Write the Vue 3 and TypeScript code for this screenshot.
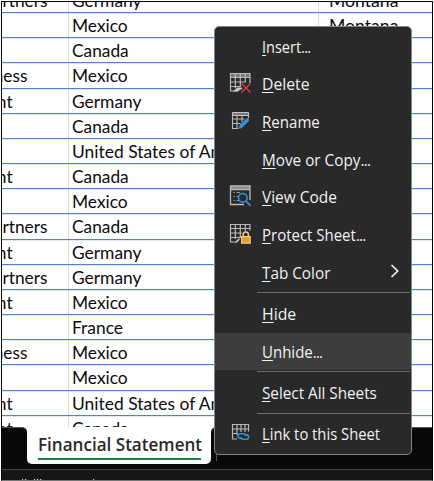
<script setup lang="ts">
import type { Directive } from 'vue'

interface Item {
  label: string
  width: number
  dots?: boolean
  icon?: 'delete' | 'rename' | 'code' | 'protect' | 'link'
  submenu?: boolean
  active?: boolean
  divider?: boolean
}

// Condenses a label horizontally so that it occupies the given width.
const vFit: Directive<HTMLElement, number> = {
  mounted(el, { value }) {
    el.style.transform = `scaleX(${value / el.offsetWidth})`
  },
}

const widths: Record<string, number> = {
  'Channel Partners': 130.6,
  'Small Business': 110.6,
  Government: 96.1,
  Germany: 69.8,
  Mexico: 56.2,
  Canada: 57,
  France: 51.1,
  'United States of America': 189.2,
  Montana: 69.7,
}

const rows: string[][] = [
  ['Channel Partners', 'Germany', 'Montana'],
  ['', 'Mexico', 'Montana'],
  ['', 'Canada', ''],
  ['Small Business', 'Mexico', ''],
  ['Government', 'Germany', ''],
  ['', 'Canada', ''],
  ['', 'United States of America', ''],
  ['Government', 'Canada', ''],
  ['', 'Mexico', ''],
  ['Channel Partners', 'Canada', ''],
  ['Government', 'Germany', ''],
  ['Channel Partners', 'Germany', ''],
  ['Government', 'Mexico', ''],
  ['', 'France', ''],
  ['Small Business', 'Mexico', ''],
  ['', 'Mexico', ''],
  ['Government', 'United States of America', ''],
  ['Government', 'Canada', ''],
]

const items: Item[] = [
  { label: 'Insert', dots: true, width: 48 },
  { label: 'Delete', width: 47.2, icon: 'delete' },
  { label: 'Rename', width: 57.5, icon: 'rename' },
  { label: 'Move or Copy', dots: true, width: 108 },
  { label: 'View Code', width: 75.2, icon: 'code' },
  { label: 'Protect Sheet', dots: true, width: 103 },
  { label: 'Tab Color', width: 68.8, submenu: true, divider: true },
  { label: 'Hide', width: 34.6 },
  { label: 'Unhide', dots: true, width: 60, active: true, divider: true },
  { label: 'Select All Sheets', width: 115.3, divider: true },
  { label: 'Link to this Sheet', width: 118.2, icon: 'link' },
]
items[5].icon = 'protect'
</script>

<template>
  <div class="page">
    <div class="window">
      <div class="sheet">
        <div v-for="(row, r) in rows" :key="r" class="row">
          <div v-for="(cell, c) in row" :key="c" class="cell">
            <span v-if="cell" v-fit="widths[cell]" class="fit">{{ cell }}</span>
          </div>
        </div>
      </div>
      <div class="tabs">
        <div class="side left"></div>
        <div class="tab"><div class="tabname"><span v-fit="164" class="fit">Financial Statement</span></div></div>
        <div class="side right"><i class="tick"></i></div>
      </div>
      <div class="status"><i class="m a"></i><i class="m b"></i><i class="m c"></i></div>
    </div>

    <div class="menu">
      <template v-for="item in items" :key="item.label">
        <div class="item" :class="{ active: item.active }">
          <div class="icon">
            <svg v-if="item.icon === 'delete'" width="22" height="22" viewBox="0 0 22 22" fill="none">
              <path d="M1 1.5h20v4H1z" fill="#777" />
              <path d="M1 1.5h20v9.5M1.5 1v18H9l2-2h2M1 5.5h20M1 10h16M1 14.5h11M6.3 1v15M11.3 1v13M16.3 1v9" stroke="#b8b8b8" stroke-width="1.2" />
              <path d="M4 19.5l4-4h5v1.5h-2l-2.5 2.5z" fill="#c4c4c4" />
              <path d="M12.5 11.5l9 9M21.5 11.5l-9 9" stroke="#db3f45" stroke-width="1.4" />
            </svg>
            <svg v-else-if="item.icon === 'rename'" width="22" height="22" viewBox="0 0 22 22" fill="none">
              <path d="M3.5 2.5h16v3h-16z" fill="#777" stroke="#c4c4c4" stroke-width="1" />
              <path d="M3.5 5v13.5H9M3.5 9h12M3.5 13.5h8M8 6v12M13 6v6M19.5 5v3" stroke="#b8b8b8" stroke-width="1.1" />
              <path d="M9.5 19l1.2-4.2 6.8-6.4q1.3-.8 2.3.4t-.2 2.4L13 18z" fill="#3092d8" />
            </svg>
            <svg v-else-if="item.icon === 'code'" width="22" height="22" viewBox="0 0 22 22" fill="none">
              <path d="M1 1h20v3.5H1z" fill="#888" />
              <path d="M15 19.5H1.5V1h19.5v14M1 4.5h20" stroke="#b8b8b8" stroke-width="1.3" />
              <path d="M4.5 7.5H6M7.5 7.5H11M4.5 11.5H6M7.5 11.5H9M4.5 15.5H6M7.5 15.5H10" stroke="#999" stroke-width="1.1" />
              <circle cx="13.8" cy="12.8" r="4.3" stroke="#3092d8" stroke-width="1.6" />
              <path d="M17 16l4.6 4.8" stroke="#3092d8" stroke-width="1.8" />
            </svg>
            <svg v-else-if="item.icon === 'protect'" width="22" height="22" viewBox="0 0 22 22" fill="none">
              <path d="M21 7.5V1.5H1.5V19H7l3-3M1 5.5h20M1 10h12M1 14.5h11M6.3 1v15M11.3 1v13M16.3 1v7" stroke="#b8b8b8" stroke-width="1.2" />
              <path d="M6 19.5l4.5-4.5v2l-2.5 2.5z" fill="#c4c4c4" />
              <path d="M14.2 13.5v-1.8q0-2.6 2.6-2.6t2.6 2.6v1.8" stroke="#f6cf7b" stroke-width="1.5" />
              <path d="M12.6 13.6h8.6v6.6h-8.6z" fill="#e99a2c" stroke="#f6cf7b" stroke-width="1.2" />
            </svg>
            <svg v-else-if="item.icon === 'link'" width="22" height="22" viewBox="0 0 22 22" fill="none">
              <path d="M19.5 9.500V2.500H3.500V17H8M3.500 7H19.500M3.500 11.500H8M8 2.500V13M12 2.500V10M16 2.500V10" stroke="#b8b8b8" stroke-width="1.2" />
              <path d="M12.500 16.300H11.300q-2.300-.1-2.300-2.300t2.300-2.300h3.200q2.300.1 2.300 2.300M16 12.700h1.300q2.300.1 2.300 2.300t-2.300 2.300h-3q-2.200-.1-2.300-2.200" stroke="#3092d8" stroke-width="1.500" />
            </svg>
          </div>
          <div class="label"><span v-fit="item.width" class="fit"><u>{{ item.label[0] }}</u>{{ item.label.slice(1) }}<span v-if="item.dots" class="dots">...</span></span></div>
          <svg v-if="item.submenu" class="chev" width="10" height="14" viewBox="0 0 10 14" fill="none">
            <path d="M1.5 1l6.2 6-6.2 6" stroke="#f2f2f2" stroke-width="1.7" />
          </svg>
        </div>
        <div v-if="item.divider" class="divider"></div>
      </template>
    </div>
  </div>
</template>

<style>
body { margin: 0; background: #fff; }
</style>

<style scoped>
.page { position: relative; width: 434px; height: 481px; overflow: hidden; background: #fff; }
.window {
  box-sizing: border-box; width: 432px; height: 480px; margin: 1px 0 0 1px;
  border: 1px solid #050505; border-bottom-color: #777; overflow: hidden; background: #fff;
  display: flex; flex-direction: column;
}
.fit { display: inline-block; white-space: pre; transform-origin: 0 50%; }
.sheet { flex: none; height: 425px; overflow: hidden; font: 16.7px/25px Lato, sans-serif; color: #0c0c0c; }
.row { height: 25.17px; box-sizing: border-box; border-bottom: 1px solid #5580cc; box-shadow: 0 1px #dfe8f7; display: grid; grid-template-columns: 67px 250px 1fr; }
.row:first-child { margin-top: -14px; }
.cell { min-width: 0; box-sizing: border-box; padding: 1px 0 0 3.2px; overflow: hidden; border-right: 1px solid #dcdcdc; height: 24.14px; line-height: 25px; }
.cell:first-child { padding-left: 0; }
.cell:first-child .fit { margin-left: -84.8px; }
.cell:last-child { border-right: 0; padding-left: 9.5px; }
.tabs { flex: none; height: 42px; display: flex; position: relative; background: linear-gradient(#fff 0 20px, #090909 20px); }
.side { background: #090909; border-top: 1px solid #555; box-sizing: border-box; }
.left { width: 25px; border-top-right-radius: 5px; }
.right { flex: 1; border-top-left-radius: 5px; padding: 26px 0 0 5px; }
.tick { display: block; width: 1px; height: 7px; background: #555; }
.tab { width: 184px; height: 37px; box-sizing: border-box; background: #fff; border-radius: 0 0 5px 5px; padding-left: 10.5px; }
.tabname {
  width: 163.5px; height: 33px; box-sizing: border-box; border-bottom: 2px solid #168348;
  font: 600 18px/34px "Open Sans", sans-serif; color: #292929; white-space: nowrap;
}
.status { flex: 1; background: #161616; border-top: 1px solid #444; display: flex; align-items: flex-end; padding-left: 20px; }
.m { height: 1px; background: repeating-linear-gradient(90deg, #ccc 0 1px, #333 1px 3px); }
.a { width: 6px; margin-right: 6px; }
.b { width: 9px; margin-right: 50px; }
.c { width: 2px; }
.menu {
  position: absolute; left: 214px; top: 26px; width: 198px; height: 429px; box-sizing: border-box;
  border: 1px solid #858585; border-radius: 5px; background: #292929; padding-top: 1px;
}
.item { height: 37.65px; display: flex; align-items: center; color: #f1f1f1; font: 16px/22px "Open Sans", sans-serif; }
.active { background: #3d3d3d; }
.icon { width: 22px; height: 22px; margin: -2px 0 0 14px; flex: none; }
.icon svg { display: block; }
.label { margin-left: 10.7px; flex: 1; white-space: nowrap; }
.label u { text-decoration-thickness: 1px; text-underline-offset: 2px; }
.dots { letter-spacing: -0.8px; }
.chev { margin-right: 11px; flex: none; position: relative; top: -2px; }
.divider { height: 1px; margin: 1px 1px 1.6px 42px; background: #6a6a6a; }
</style>
